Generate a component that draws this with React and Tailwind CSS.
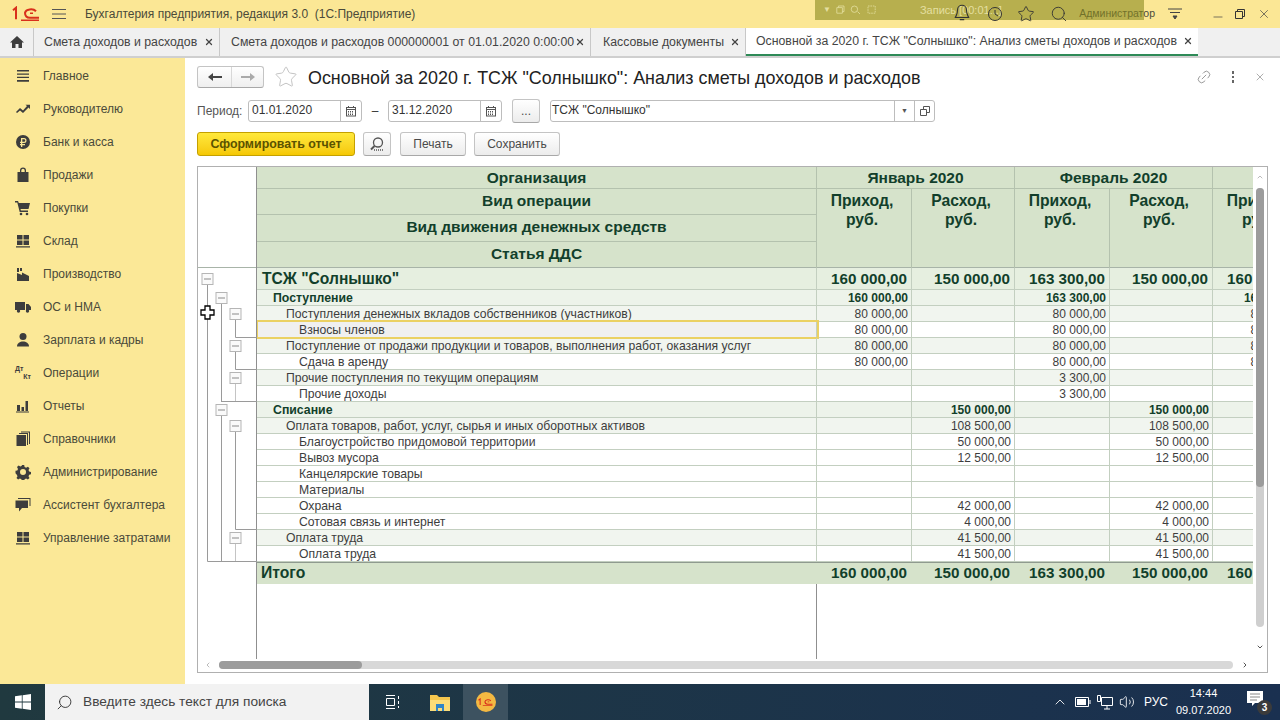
import { Star, Search, Link2, X, Minus, ChevronUp, ChevronDown, Volume2, ChevronLeft, ChevronRight } from "lucide-react";

const menu = [
  ["Главное", "lines"],
  ["Руководителю", "trend"],
  ["Банк и касса", "ruble"],
  ["Продажи", "bag"],
  ["Покупки", "cart"],
  ["Склад", "grid"],
  ["Производство", "factory"],
  ["ОС и НМА", "truck"],
  ["Зарплата и кадры", "user"],
  ["Операции", "dtkt"],
  ["Отчеты", "bars"],
  ["Справочники", "books"],
  ["Администрирование", "gear"],
  ["Ассистент бухгалтера", "chat"],
  ["Управление затратами", "grid"],
];

const tabs = [
  ["Смета доходов и расходов", "w-[186px] pl-[10px]"],
  ["Смета доходов и расходов 000000001 от 01.01.2020 0:00:00", "w-[371px] pl-[11px]"],
  ["Кассовые документы", "w-[155px] pl-[12px]"],
];

const rows = [
  ["ТСЖ \"Солнышко\"", 0, "160 000,00", "150 000,00", "163 300,00", "150 000,00", "160 000,00"],
  ["Поступление", 1, "160 000,00", "", "163 300,00", "", "160 000,00"],
  ["Поступления денежных вкладов собственников (участников)", 2, "80 000,00", "", "80 000,00", "", "80 000,00"],
  ["Взносы членов", 3, "80 000,00", "", "80 000,00", "", "80 000,00"],
  ["Поступление от продажи продукции и товаров, выполнения работ, оказания услуг", 2, "80 000,00", "", "80 000,00", "", "80 000,00"],
  ["Сдача в аренду", 3, "80 000,00", "", "80 000,00", "", "80 000,00"],
  ["Прочие поступления по текущим операциям", 2, "", "", "3 300,00", "", ""],
  ["Прочие доходы", 3, "", "", "3 300,00", "", ""],
  ["Списание", 1, "", "150 000,00", "", "150 000,00", ""],
  ["Оплата товаров, работ, услуг, сырья и иных оборотных активов", 2, "", "108 500,00", "", "108 500,00", ""],
  ["Благоустройство придомовой территории", 3, "", "50 000,00", "", "50 000,00", ""],
  ["Вывоз мусора", 3, "", "12 500,00", "", "12 500,00", ""],
  ["Канцелярские товары", 3, "", "", "", "", ""],
  ["Материалы", 3, "", "", "", "", ""],
  ["Охрана", 3, "", "42 000,00", "", "42 000,00", ""],
  ["Сотовая связь и интернет", 3, "", "4 000,00", "", "4 000,00", ""],
  ["Оплата труда", 2, "", "41 500,00", "", "41 500,00", ""],
  ["Оплата труда", 3, "", "41 500,00", "", "41 500,00", ""],
];

const rowStyle = {
  0: "h-[22px] grid-rows-[22px] bg-[#e6efe0] text-[15.200px] font-bold text-[#123f2b] leading-[21px]",
  1: "h-[16px] grid-rows-[16px] bg-[#edf3ea] text-[12px] font-bold text-[#123f2b] leading-[17px]",
  2: "h-[16px] grid-rows-[16px] bg-[#f1f5ef] text-[12px] text-[#3d3d3d] leading-[17px]",
  3: "h-[16px] grid-rows-[16px] bg-white text-[12px] text-[#3d3d3d] leading-[17px]",
};

const labelStyle = {
  0: "pl-[5px] text-[15.600px]",
  1: "pl-[16px] text-[12.300px]",
  2: "pl-[29px] text-[12.200px]",
  3: "pl-[42px] text-[12.200px]",
};

const cols = "grid grid-cols-[560px_95px_103px_95px_103px_95px] w-[1051px] shrink-0";

const MenuIcon = ({ name }) => {
  const c = "#3d3d3d";
  if (name === "dtkt") {
    return (
      <span className="relative block w-[16px] h-[16px] text-[7px] leading-[8px] font-bold text-[#3d3d3d]">
        <span className="block">Дт</span>
        <span className="block text-right">Кт</span>
      </span>
    );
  }
  return (
    <svg width="16" height="16" viewBox="0 0 16 16" fill={c}>
      {name === "lines" && <path d="M2 2h12v1.6H2zM2 5.6h12v1.2H2zM2 8.8h12v1.2H2zM2 12h12v1.8H2z" />}
      {name === "trend" && <path d="M1 11l4-4 3 2.5L12 5l-1.5-1.3H15V8l-1.5-1.5L8 12 5 9.5 2 12z" />}
      {name === "ruble" && (
        <>
          <circle cx="8" cy="8" r="7" />
          <path d="M6 4h3a2.4 2.4 0 010 5H7.300v1H10v1.200H7.300V13H6v-1.800H5V10h1V9H5V7.800h1zm1.300 1.200v2.600H9a1.300 1.300 0 000-2.600z" fill="#fbe897" />
        </>
      )}
      {name === "bag" && <path d="M2.500 5H5V3.500a3 3 0 016 0V5h2.500v10h-11zM6.300 5h3.400V3.500a1.700 1.700 0 00-3.400 0z" />}
      {name === "cart" && (
        <>
          <path d="M0 1h3l.8 2H15l-1.500 6H5.500l.4 1.500H13V12H4.700L2.300 2.500H0z" />
          <circle cx="6" cy="14" r="1.300" />
          <circle cx="12" cy="14" r="1.300" />
        </>
      )}
      {name === "grid" && <path d="M2 2h5.500v4.500H2zM8.500 2H14v4.500H8.500zM2 7.500h5.500V12H2zM8.500 7.500H14V12H8.500zM1 13.300h14v1.200H1z" />}
      {name === "factory" && <path d="M2 2h2v4H2zM5 2h2v3H5zM2 7l5 2V6.500l7 3.500v5H2z" />}
      {name === "truck" && (
        <>
          <path d="M0 3h10v8H0zM11 5h2.500L16 8v3h-5z" />
          <circle cx="3.500" cy="12" r="1.700" />
          <circle cx="12.500" cy="12" r="1.700" />
        </>
      )}
      {name === "user" && (
        <>
          <circle cx="8" cy="4.500" r="3.500" />
          <path d="M2 14.500c0-3.500 3-5 6-5s6 1.500 6 5z" />
        </>
      )}
      {name === "bars" && <path d="M2 7h3v6H2zM6.500 9h2.500v4H6.500zM10.500 3H13v10h-2.500zM1 13.500h13v1H1z" />}
      {name === "books" && (
        <>
          <path d="M1.500 4h9.500v11H1.500z" />
          <path d="M12 3v11h1V2H4v1zM14 1.500V13h1V.500H6v1z" />
        </>
      )}
      {name === "gear" && (
        <path fillRule="evenodd" d="M6.800 1h2.400l.4 2 1.500.7 1.800-1 1.600 1.600-1 1.800.7 1.500 1.800.3v2.400l-1.800.4-.7 1.500 1 1.800-1.600 1.600-1.800-1-1.500.7-.4 1.700H6.800l-.4-1.800-1.500-.6-1.800 1-1.600-1.600 1-1.800-.7-1.500L.5 9.200V6.800l1.800-.4.700-1.500-1-1.800 1.600-1.600 1.800 1 1.500-.7zM8 5a3 3 0 100 6 3 3 0 000-6z" />
      )}
      {name === "chat" && <path d="M3 1h12.500v8h-1V2H3zM.5 3.500h12.500V11H7l-3 3.500V11H.5z" />}
    </svg>
  );
};

const CalendarIcon = () => (
  <svg width="12" height="12" viewBox="0 0 12 12" fill="none" stroke="#555" strokeWidth="1">
    <rect x="1.500" y="2.500" width="9" height="8.500" />
    <path d="M3.500 1v2M8.500 1v2M1.500 4.500h9" />
    <path d="M3 6.500h6M3 8h6M3 9.500h6" strokeDasharray="1 1" />
  </svg>
);

const DateField = ({ value }) => (
  <div className="flex h-[22px] w-[114px] rounded-[3px] border border-[#bdbdbd] bg-white">
    <span className="flex-1 pl-[3px] text-[12px] leading-[19px] text-[#333]">{value}</span>
    <span className="flex w-[21px] items-center justify-center border-l border-[#bdbdbd]">
      <CalendarIcon />
    </span>
  </div>
);

const GrayButton = ({ className, children }) => (
  <button className={`flex h-[24px] items-center justify-center rounded-[3px] border border-[#c4c4c4] border-b-[#a8a8a8] bg-linear-to-b from-white to-[#ececec] text-[12px] text-[#4a4a4a] ${className}`}>
    {children}
  </button>
);

const MinusBox = ({ x, y }) => (
  <g>
    <rect x={x - 5} y={y - 5.500} width="11" height="11" fill="#fafafa" stroke="#b5b5b5" />
    <path d={`M${x - 3} ${y}h7`} stroke="#8a8a8a" />
  </g>
);

const TreeLines = () => (
  <svg width="59" height="316" viewBox="197 268 59 316" className="block">
    <g fill="none" stroke="#9a9a9a">
      <path d="M206.500 284V561.500H256" />
      <path d="M220.500 303V402" />
      <path d="M220.500 415V561" />
      <path d="M234.500 319V337.500H256" />
      <path d="M234.500 351V369.500H256" />
      <path d="M234.500 383V401.500" stroke="#c4c4c4" />
      <path d="M220.500 401.500H256" />
      <path d="M234.500 431V529.500H256" />
      <path d="M234.500 543V561" stroke="#c4c4c4" />
    </g>
    <MinusBox x={206} y={279} />
    <MinusBox x={220} y={298} />
    <MinusBox x={234} y={314} />
    <MinusBox x={234} y={346} />
    <MinusBox x={234} y={378} />
    <MinusBox x={220} y={410} />
    <MinusBox x={234} y={426} />
    <MinusBox x={234} y={538} />
    {/* mouse cursor */}
    <path d="M204 306h5v4h4v5h-4v4h-5v-4h-4v-5h4z" fill="#fff" stroke="#000" strokeWidth="1.300" />
  </svg>
);

const Logo1C = ({ w = 28 }) => (
  <svg width={w} height={w * 0.55} viewBox="0 0 28 15" fill="none" stroke="#d8301c" strokeWidth="2">
    <path d="M1 4l3-2.500V13" />
    <path d="M24 5a6 4 0 00-11 1.500c0 3 2 5 5 5h9" />
    <path d="M21 7h-3M27 14H9" strokeWidth="1.500" />
  </svg>
);

const App = () => {
  return (
    <div className="relative flex h-[720px] w-[1280px] flex-col overflow-hidden bg-white font-['Liberation_Sans',Arial,sans-serif]">
      {/* TOP BAR */}
      <header className="flex h-[28px] shrink-0 items-center bg-[#fbe795] text-[12px] text-[#4a4a3a]">
        <div className="ml-[12px] w-[28px]">
          <Logo1C />
        </div>
        <svg width="14" height="12" viewBox="0 0 14 12" className="ml-[12px]" stroke="#555">
          <path d="M0 1.500h14M0 6h14M0 10.500h14" />
        </svg>
        <span className="ml-[19px]">Бухгалтерия предприятия, редакция 3.0&nbsp; (1С:Предприятие)</span>
        <div className="ml-auto mr-[125px] text-[10.500px]">Администратор</div>
      </header>

      {/* screen recorder strip lying over the title bar */}
      <div className="absolute left-[815px] top-0 flex h-[20px] w-[329px] items-center bg-[#8a8a20]/60 text-[11px] text-[#e4dfa0]">
        <span className="ml-[8px] text-[8px]">▼</span>
        <svg width="40" height="12" viewBox="0 0 50 12" fill="none" stroke="#e4dfa0" className="ml-[5px]">
          <path d="M3 3V1h7v7H8M1 3h7v7H1zM27 8l3 3" />
          <circle cx="23" cy="5" r="4" />
          <path d="M40 1h9v9h-9z" strokeDasharray="2 1" />
        </svg>
        <span className="ml-[44px]">Запись [00:01:..]</span>
      </div>
      <div className="absolute right-0 top-0 flex h-[28px] items-center text-[#444]">
        <svg width="20" height="20" viewBox="0 0 18 18" fill="none" stroke="#333" className="absolute right-[308px] top-[3px]">
          <path d="M9 2a4 4 0 014 4c0 4 1 5 2 7H3c1-2 2-3 2-7a4 4 0 014-4zM7 15h4" />
        </svg>
        <svg width="18" height="18" viewBox="0 0 18 18" fill="none" stroke="#333" className="absolute right-[276px] top-[5px]">
          <circle cx="9" cy="9" r="6.500" />
          <path d="M9 5v4l3 2" />
        </svg>
        <Star size={18} strokeWidth={1.200} className="absolute right-[245px] top-[5px]" color="#333" />
        <Search size={18} strokeWidth={1.200} className="absolute right-[212px] top-[5px]" color="#333" />
        <svg width="14" height="12" viewBox="0 0 14 12" stroke="#444" className="absolute right-[98px] top-[8px]">
          <path d="M0 1h14M2 4.500h10" />
          <path d="M5 8h4l-2 3z" fill="#444" />
        </svg>
        <Minus size={14} strokeWidth={1.200} className="absolute right-[55px] top-[10px]" />
        <svg width="10" height="10" viewBox="0 0 10 10" fill="none" stroke="#333" className="absolute right-[35px] top-[9px]">
          <path d="M2.500 2.500V.5h7v7h-2M.5 2.500h7v7h-7z" />
        </svg>
        <X size={14} strokeWidth={1.200} className="absolute right-[9px] top-[7px]" />
      </div>

      {/* TABS */}
      <nav className="flex h-[30px] shrink-0 border-b-2 border-[#cfcfcf] bg-[#f0f0f0] text-[12.300px] text-[#444]">
        <div className="flex w-[34px] items-center justify-center border-r border-[#c8c8c8]">
          <svg width="14" height="14" viewBox="0 0 14 14" fill="#3d3d3d">
            <path d="M7 1L0 7.500h2V13h3.500V9h3v4H12V7.500h2z" />
          </svg>
        </div>
        {tabs.map(([title, width]) => (
          <div key={title} className={`flex items-center justify-between border-r border-[#c8c8c8] pr-[5px] ${width}`}>
            <span className="whitespace-nowrap">{title}</span>
            <X size={10} strokeWidth={3} />
          </div>
        ))}
        <div className="flex w-[452px] items-center justify-between border-b-2 border-[#2e8a57] bg-white pl-[10px] pr-[5px]">
          <span className="whitespace-nowrap">Основной за 2020 г. ТСЖ "Солнышко": Анализ сметы доходов и расходов</span>
          <X size={10} strokeWidth={3} />
        </div>
      </nav>

      <div className="flex min-h-0 flex-1">
        {/* SIDEBAR */}
        <aside className="w-[185px] shrink-0 bg-[#fbe897] pt-[1px] text-[12px] text-[#4a4a3a]">
          {menu.map(([title, icon]) => (
            <div key={title} className="flex h-[33px] items-center pl-[15px]">
              <MenuIcon name={icon} />
              <span className="ml-[12px] whitespace-nowrap">{title}</span>
            </div>
          ))}
        </aside>

        {/* FORM */}
        <main className="flex min-w-0 flex-1 flex-col pl-[12px] pr-[13px] pt-[8px]">
          <div className="flex h-[22px] items-center">
            <div className="flex h-[22px] w-[67px] rounded-[3px] border border-[#c4c4c4] border-b-[#a8a8a8] bg-linear-to-b from-white to-[#efefef]">
              <span className="flex w-[34px] items-center justify-center border-r border-[#d8d8d8]">
                <svg width="14" height="10" viewBox="0 0 14 10" fill="#444">
                  <path d="M0 5l5-4v3h9v2H5v3z" />
                </svg>
              </span>
              <span className="flex flex-1 items-center justify-center">
                <svg width="14" height="10" viewBox="0 0 14 10" fill="#aaa">
                  <path d="M14 5L9 1v3H0v2h9v3z" />
                </svg>
              </span>
            </div>
            <Star size={24} strokeWidth={1} color="#c4c4c4" className="ml-[10px]" />
            <h1 className="ml-[10px] mt-[2px] whitespace-nowrap text-[17.900px] font-normal text-[#222]">
              Основной за 2020 г. ТСЖ "Солнышко": Анализ сметы доходов и расходов
            </h1>
            <Link2 size={16} strokeWidth={1.200} color="#888" className="ml-auto mr-[20px] -rotate-45" />
            <span className="mr-[20px] flex flex-col gap-[2px]">
              <i className="block h-[2.500px] w-[2.500px] bg-[#666]" />
              <i className="block h-[2.500px] w-[2.500px] bg-[#666]" />
              <i className="block h-[2.500px] w-[2.500px] bg-[#666]" />
            </span>
            <X size={12} strokeWidth={1.200} color="#777" className="mr-[1px]" />
          </div>

          <div className="mt-[12px] flex h-[22px] items-center text-[12px]">
            <span className="w-[51px] text-[#555]">Период:</span>
            <DateField value="01.01.2020" />
            <span className="w-[26px] text-center text-[#333]">–</span>
            <DateField value="31.12.2020" />
            <GrayButton className="ml-[10px] w-[28px] text-[10px]">...</GrayButton>
            <div className="ml-[10px] flex h-[22px] w-[385px] rounded-[3px] border border-[#bdbdbd] bg-white">
              <span className="flex-1 pl-[1px] leading-[19px] text-[#333]">ТСЖ "Солнышко"</span>
              <span className="flex w-[20px] items-center justify-center border-l border-[#bdbdbd] text-[7px] text-[#555]">▼</span>
              <span className="flex w-[20px] items-center justify-center border-l border-[#bdbdbd]">
                <svg width="10" height="10" viewBox="0 0 10 10" fill="none" stroke="#555">
                  <path d="M3.500 3.500V.5h6v6h-3M.5 3.500h6v6h-6z" />
                </svg>
              </span>
            </div>
          </div>

          <div className="mt-[10px] flex h-[24px] items-center gap-[8px]">
            <button className="h-[24px] w-[158px] rounded-[3px] border border-[#c4a000] bg-linear-to-b from-[#ffe93a] to-[#f5c800] text-[12.400px] font-bold text-[#5b5200]">
              Сформировать отчет
            </button>
            <GrayButton className="w-[28px]">
              <svg width="16" height="16" viewBox="0 0 16 16" fill="none" stroke="#555" strokeWidth="1.300">
                <circle cx="9" cy="6.500" r="4.500" />
                <path d="M5.500 10L2 13.500" strokeWidth="2" />
                <path d="M5 14h9" strokeDasharray="1 1" />
              </svg>
            </GrayButton>
            <GrayButton className="ml-[1px] w-[66px]">Печать</GrayButton>
            <GrayButton className="w-[86px]">Сохранить</GrayButton>
          </div>

          {/* REPORT */}
          <section className="mt-[10px] flex h-[507px] w-[1071px] flex-col border border-[#b0b0b0]">
            <div className="flex min-h-0 flex-1">
              <div className="w-[59px] shrink-0 border-r border-[#8f8f8f]">
                <div className="h-[101px] border-b border-[#a8b4a8]" />
                <TreeLines />
              </div>

              <div className="flex min-w-0 flex-1 flex-col overflow-hidden">
                <div className={`${cols} h-[101px] grid-rows-[22px_26px_27px_26px] bg-[#d6e3cb] text-[15.500px] font-bold text-[#123f2b] border-b border-[#a8b4a8]`}>
                  <div className="flex items-center justify-center border-r border-b border-[#b4c2ae]">Организация</div>
                  <div className="col-span-2 flex items-center justify-center border-r border-b border-[#b4c2ae]">Январь 2020</div>
                  <div className="col-span-2 flex items-center justify-center border-r border-b border-[#b4c2ae]">Февраль 2020</div>
                  <div className="border-b border-[#b4c2ae]" />
                  {["Приход,", "Расход,", "Приход,", "Расход,", "Приход,"].map((head, i) => (
                    <div key={i} className={`row-span-3 row-start-2 pr-[4px] pt-[2px] text-center text-[15.700px] leading-[19px] border-r border-[#b4c2ae] ${["col-start-2", "col-start-3", "col-start-4", "col-start-5", "col-start-6"][i]}`}>
                      {head}
                      <br />
                      руб.
                    </div>
                  ))}
                  <div className="col-start-1 row-start-2 flex items-center justify-center border-r border-b border-[#b4c2ae] pb-[1px]">Вид операции</div>
                  <div className="col-start-1 row-start-3 flex items-center justify-center border-r border-b border-[#b4c2ae] pb-[2px]">Вид движения денежных средств</div>
                  <div className="col-start-1 row-start-4 flex items-center justify-center border-r border-[#b4c2ae] pb-[2px]">Статья ДДС</div>
                </div>

                {rows.map(([label, level, ...values], i) => (
                  <div key={i} className={`${cols} ${rowStyle[level]}`}>
                    <div className={`relative whitespace-nowrap border-b border-r border-[#c3cfc0] ${labelStyle[level]} ${i === 3 ? "bg-[#f0f0f0]" : ""}`}>
                      {label}
                      {i === 3 && <span className="absolute -left-px -right-[3px] -top-[2px] -bottom-[2px] border-2 border-[#ebd163]" />}
                    </div>
                    {values.map((v, j) => (
                      <div key={j} className={`overflow-hidden border-b border-r border-[#c3cfc0] text-right ${level === 0 ? "pr-[4px]" : "pr-[3px]"}`}>
                        {v}
                      </div>
                    ))}
                  </div>
                ))}

                <div className={`${cols} h-[22px] border-t border-[#8f9a8f] bg-[#d6e3cb] text-[15.200px] font-bold leading-[20px] text-[#123f2b]`}>
                  <div className="pl-[4px] text-[15.700px]">Итого</div>
                  {["160 000,00", "150 000,00", "163 300,00", "150 000,00", "160 000,00"].map((v, j) => (
                    <div key={j} className="pr-[5px] text-right">{v}</div>
                  ))}
                </div>
                <div className={`${cols} flex-1`}>
                  <div className="border-r border-[#8f8f8f]" />
                </div>
              </div>

              {/* VERTICAL SCROLL */}
              <div className="flex w-[14px] shrink-0 flex-col items-center pt-[6px] pb-[8px]">
                <ChevronUp size={8} strokeWidth={3} color="#bbb" />
                <div className="mb-[16px] mt-[7px] flex w-[8px] flex-1 flex-col rounded-[4px] bg-[#cfcfcf]">
                  <div className="h-[299px] rounded-[4px] bg-[#9c9c9c]" />
                </div>
                <ChevronDown size={8} strokeWidth={3} color="#555" />
              </div>
            </div>

            {/* HORIZONTAL SCROLL */}
            <div className="flex h-[13px] shrink-0 items-center pb-[2px] pl-[6px] pr-[18px]">
              <ChevronLeft size={8} strokeWidth={3} color="#bbb" />
              <div className="ml-[7px] mr-[8px] flex h-[8px] flex-1 rounded-[4px] bg-[#d8d8d8]">
                <div className="w-[143px] rounded-[4px] bg-[#9c9c9c]" />
              </div>
              <ChevronRight size={8} strokeWidth={3} color="#555" />
            </div>
          </section>
        </main>
      </div>

      {/* TASKBAR */}
      <footer className="flex h-[36px] shrink-0 items-center bg-linear-to-r from-[#20393f] to-[#1a3050] text-white">
        <div className="flex w-[45px] justify-center">
          <svg width="16" height="16" viewBox="0 0 16 16" fill="#fff">
            <path d="M0 2.300L6.800 1.300V7.600H0zM7.600 1.200L16 0V7.600H7.600zM0 8.400H6.800V14.700L0 13.700zM7.600 8.400H16V16L7.600 14.800z" />
          </svg>
        </div>
        <div className="flex h-[36px] w-[324px] items-center bg-[#f2f2f2] pl-[11px] text-[13.700px] text-[#444]">
          <Search size={17} strokeWidth={1.300} color="#333" className="-scale-x-100" />
          <span className="ml-[10px]">Введите здесь текст для поиска</span>
        </div>
        <div className="flex w-[47px] justify-center">
          <svg width="16" height="14" viewBox="0 0 16 14" fill="none" stroke="#fff">
            <path d="M1 .5h9M1 13.500h9M1.500 3.500h8v7h-8zM13.500 1v3M13.500 6v3M13.500 11v2" />
          </svg>
        </div>
        <div className="flex w-[47px] justify-center">
          <svg width="20" height="17" viewBox="0 0 20 17">
            <path d="M0 1h7l2 2h11v14H0z" fill="#f4c64e" />
            <path d="M0 6h20v11H0z" fill="#fbdd78" />
            <path d="M6 10h8v7h-2v-3H8v3H6z" fill="#2f86c9" />
          </svg>
        </div>
        <div className="flex h-[36px] w-[45px] items-center justify-center bg-[#3d5260]">
          <span className="flex h-[20px] w-[20px] items-center justify-center rounded-full bg-[#f4b942]">
            <Logo1C w={15} />
          </span>
        </div>

        <div className="ml-auto flex items-center text-[12px]">
          <ChevronUp size={16} strokeWidth={1.300} />
          <svg width="16" height="10" viewBox="0 0 16 10" fill="none" stroke="#fff" className="ml-[7px]">
            <path d="M.5.5h13v9H.5z" />
            <path d="M2 2h9v6H2z" fill="#fff" stroke="none" />
            <path d="M15 3v4" />
          </svg>
          <svg width="16" height="15" viewBox="0 0 16 15" fill="none" stroke="#fff" className="ml-[6px]">
            <path d="M4.500 2.500h11v8h-11zM7 14h6M10 10.500V14M.5.5h3v6h-3z" />
          </svg>
          <Volume2 size={16} strokeWidth={1.300} className="ml-[6px]" />
          <span className="ml-[9px] text-[12px]">РУС</span>
          <div className="ml-[8px] w-[55px] text-center text-[11px] leading-[17px]">
            <div>14:44</div>
            <div>09.07.2020</div>
          </div>
          <div className="relative ml-[15px] mr-[8px] h-[26px] w-[26px]">
            <svg width="16" height="16" viewBox="0 0 16 16" className="absolute left-[1px] top-[2px]">
              <path d="M0 0h16v12H8l-3 3v-3H0z" fill="#fff" />
              <path d="M3 3h10M3 6h10M3 9h7" stroke="#888" />
            </svg>
            <span className="absolute bottom-0 right-0 flex h-[15px] w-[15px] items-center justify-center rounded-full bg-[#3b3b3b] text-[10px] font-bold">3</span>
          </div>
        </div>
      </footer>
    </div>
  );
};

export default App;
